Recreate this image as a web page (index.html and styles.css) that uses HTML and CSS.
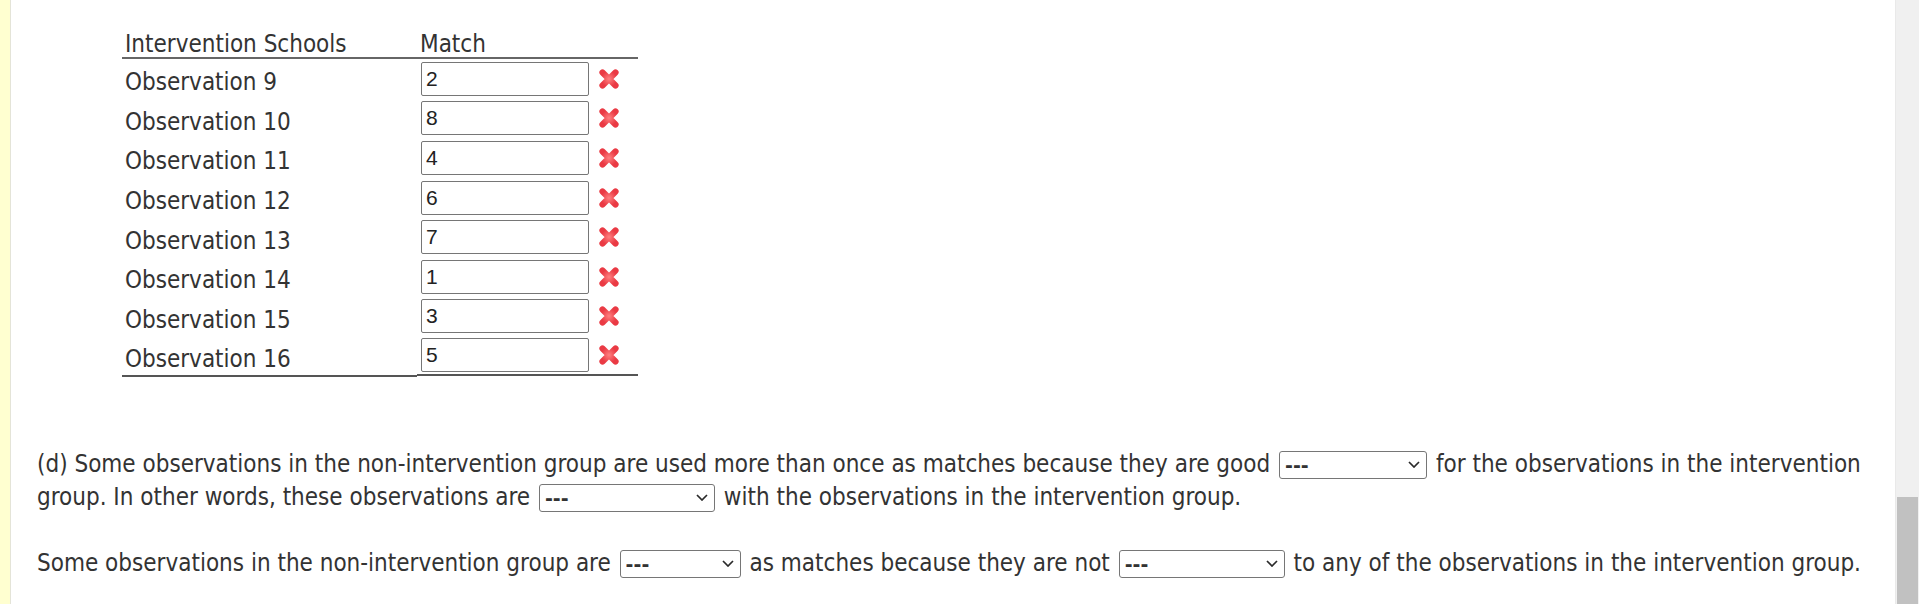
FILE: index.html
```html
<!DOCTYPE html>
<html lang="en">
<head>
<meta charset="utf-8">
<title>Matching</title>
<link rel="stylesheet" href="styles.css">
</head>
<body>
<div class="page">
  <div class="content">
    <table class="match-table">
      <thead>
        <tr><th class="col-name">Intervention Schools</th><th class="col-match">Match</th></tr>
      </thead>
      <tbody>
        <tr><td class="cell-label">Observation 9</td><td class="cell-match"><input class="match-input" type="text" value="2"><svg class="wrong" viewBox="0 0 22 22"><use href="#x"/></svg></td></tr>
        <tr><td class="cell-label">Observation 10</td><td class="cell-match"><input class="match-input" type="text" value="8"><svg class="wrong" viewBox="0 0 22 22"><use href="#x"/></svg></td></tr>
        <tr><td class="cell-label">Observation 11</td><td class="cell-match"><input class="match-input" type="text" value="4"><svg class="wrong" viewBox="0 0 22 22"><use href="#x"/></svg></td></tr>
        <tr><td class="cell-label">Observation 12</td><td class="cell-match"><input class="match-input" type="text" value="6"><svg class="wrong" viewBox="0 0 22 22"><use href="#x"/></svg></td></tr>
        <tr><td class="cell-label">Observation 13</td><td class="cell-match"><input class="match-input" type="text" value="7"><svg class="wrong" viewBox="0 0 22 22"><use href="#x"/></svg></td></tr>
        <tr><td class="cell-label">Observation 14</td><td class="cell-match"><input class="match-input" type="text" value="1"><svg class="wrong" viewBox="0 0 22 22"><use href="#x"/></svg></td></tr>
        <tr><td class="cell-label">Observation 15</td><td class="cell-match"><input class="match-input" type="text" value="3"><svg class="wrong" viewBox="0 0 22 22"><use href="#x"/></svg></td></tr>
        <tr><td class="cell-label">Observation 16</td><td class="cell-match"><input class="match-input" type="text" value="5"><svg class="wrong" viewBox="0 0 22 22"><use href="#x"/></svg></td></tr>
      </tbody>
    </table>

    <p class="question first">(d) Some observations in the non-intervention group are used more than once as matches because they are good <span class="pick-wrap"><select class="pick w148"><option>---</option></select><svg class="chev" viewBox="0 0 12 7"><path d="M1 1 L6 6 L11 1"/></svg></span> for the observations in the intervention group. In other words, these observations are <span class="pick-wrap"><select class="pick w176"><option>---</option></select><svg class="chev" viewBox="0 0 12 7"><path d="M1 1 L6 6 L11 1"/></svg></span> with the observations in the intervention group.</p>

    <p class="question">Some observations in the non-intervention group are <span class="pick-wrap"><select class="pick w121"><option>---</option></select><svg class="chev" viewBox="0 0 12 7"><path d="M1 1 L6 6 L11 1"/></svg></span> as matches because they are not <span class="pick-wrap"><select class="pick w166"><option>---</option></select><svg class="chev" viewBox="0 0 12 7"><path d="M1 1 L6 6 L11 1"/></svg></span> to any of the observations in the intervention group.</p>
  </div>
</div>

<div class="scrollbar"><div class="thumb"></div></div>

<svg class="defs" width="0" height="0" aria-hidden="true">
  <defs>
    <radialGradient id="xg" cx="50%" cy="50%" r="60%">
      <stop offset="0%" stop-color="#ff8080"/>
      <stop offset="100%" stop-color="#ea3a44"/>
    </radialGradient>
    <g id="x">
      <path d="M4.5 4.5 L17.5 17.5 M17.5 4.5 L4.5 17.5" stroke="url(#xg)" stroke-width="6.2" stroke-linecap="round" fill="none"/>
    </g>
  </defs>
</svg>
</body>
</html>
```

FILE: styles.css
```css
html, body {
  margin: 0;
  padding: 0;
  height: 100%;
  overflow: hidden;
  background: #ffffff;
}

body {
  font-family: "DejaVu Sans Condensed", "DejaVu Sans", Verdana, sans-serif;
  font-stretch: condensed;
  font-size: 24px;
  color: #333333;
}

.page {
  min-height: 100%;
  border-left: 10px solid #ffffd0;
  box-shadow: inset 1px 0 0 #e4e4d8;
  box-sizing: border-box;
}

.content {
  padding: 27px 40px 0 27px;
}

.match-table {
  border-collapse: collapse;
  margin-left: 85px;
  width: 516px;
}

.match-table th {
  font-weight: normal;
  text-align: left;
  line-height: 21px;
  padding: 7px 3px 2px 3px;
  border-bottom: 2px solid #666666;
}

.col-name { width: 289px; }

.match-table td {
  height: 39.6px;
  padding: 0 3px;
  vertical-align: middle;
  box-sizing: border-box;
  line-height: 28px;
}

.match-table td.cell-label {
  padding-top: 7px;
}

.match-table tbody tr:last-child td {
  border-bottom: 2px solid #555555;
}

.cell-match {
  display: flex;
  align-items: center;
  gap: 9px;
}

.match-input {
  box-sizing: border-box;
  width: 168px;
  height: 34px;
  margin: 0 0 0 1px;
  padding: 0 4px;
  border: 1px solid #767676;
  border-radius: 2px;
  font-family: "Liberation Sans", Arial, sans-serif;
  font-stretch: normal;
  font-size: 21px;
  color: #222222;
  background: #ffffff;
}

.wrong {
  width: 22px;
  height: 22px;
  flex: none;
}

.defs {
  position: absolute;
  width: 0;
  height: 0;
}

.question {
  margin: 0;
  line-height: 33px;
}

.question.first {
  margin-top: 71px;
  margin-bottom: 33px;
}

.pick-wrap {
  position: relative;
  display: inline-block;
  vertical-align: middle;
  margin: 0 2px;
  line-height: 0;
}

.pick {
  box-sizing: border-box;
  height: 28px;
  margin: 0;
  padding: 0 0 0 5px;
  -webkit-appearance: none;
  appearance: none;
  font-family: "DejaVu Sans", sans-serif;
  font-stretch: normal;
  font-size: 19px;
  font-weight: bold;
  color: #333333;
  border: 1px solid #767676;
  border-radius: 3px;
  background: #ffffff;
}

.chev {
  position: absolute;
  right: 7px;
  top: 10px;
  width: 12px;
  height: 7px;
  pointer-events: none;
  fill: none;
  stroke: #2a2a2a;
  stroke-width: 1.7;
}

.w148 { width: 148px; }
.w176 { width: 176px; }
.w121 { width: 121px; }
.w166 { width: 166px; }

.scrollbar {
  position: fixed;
  top: 0;
  right: 0;
  width: 24px;
  height: 100%;
  background: #f0f0f0;
  box-shadow: inset 1px 0 0 #e9e9e9;
}

.thumb {
  position: absolute;
  top: 497px;
  left: 2px;
  right: 1px;
  bottom: 0;
  background: #c1c1c1;
}
```
